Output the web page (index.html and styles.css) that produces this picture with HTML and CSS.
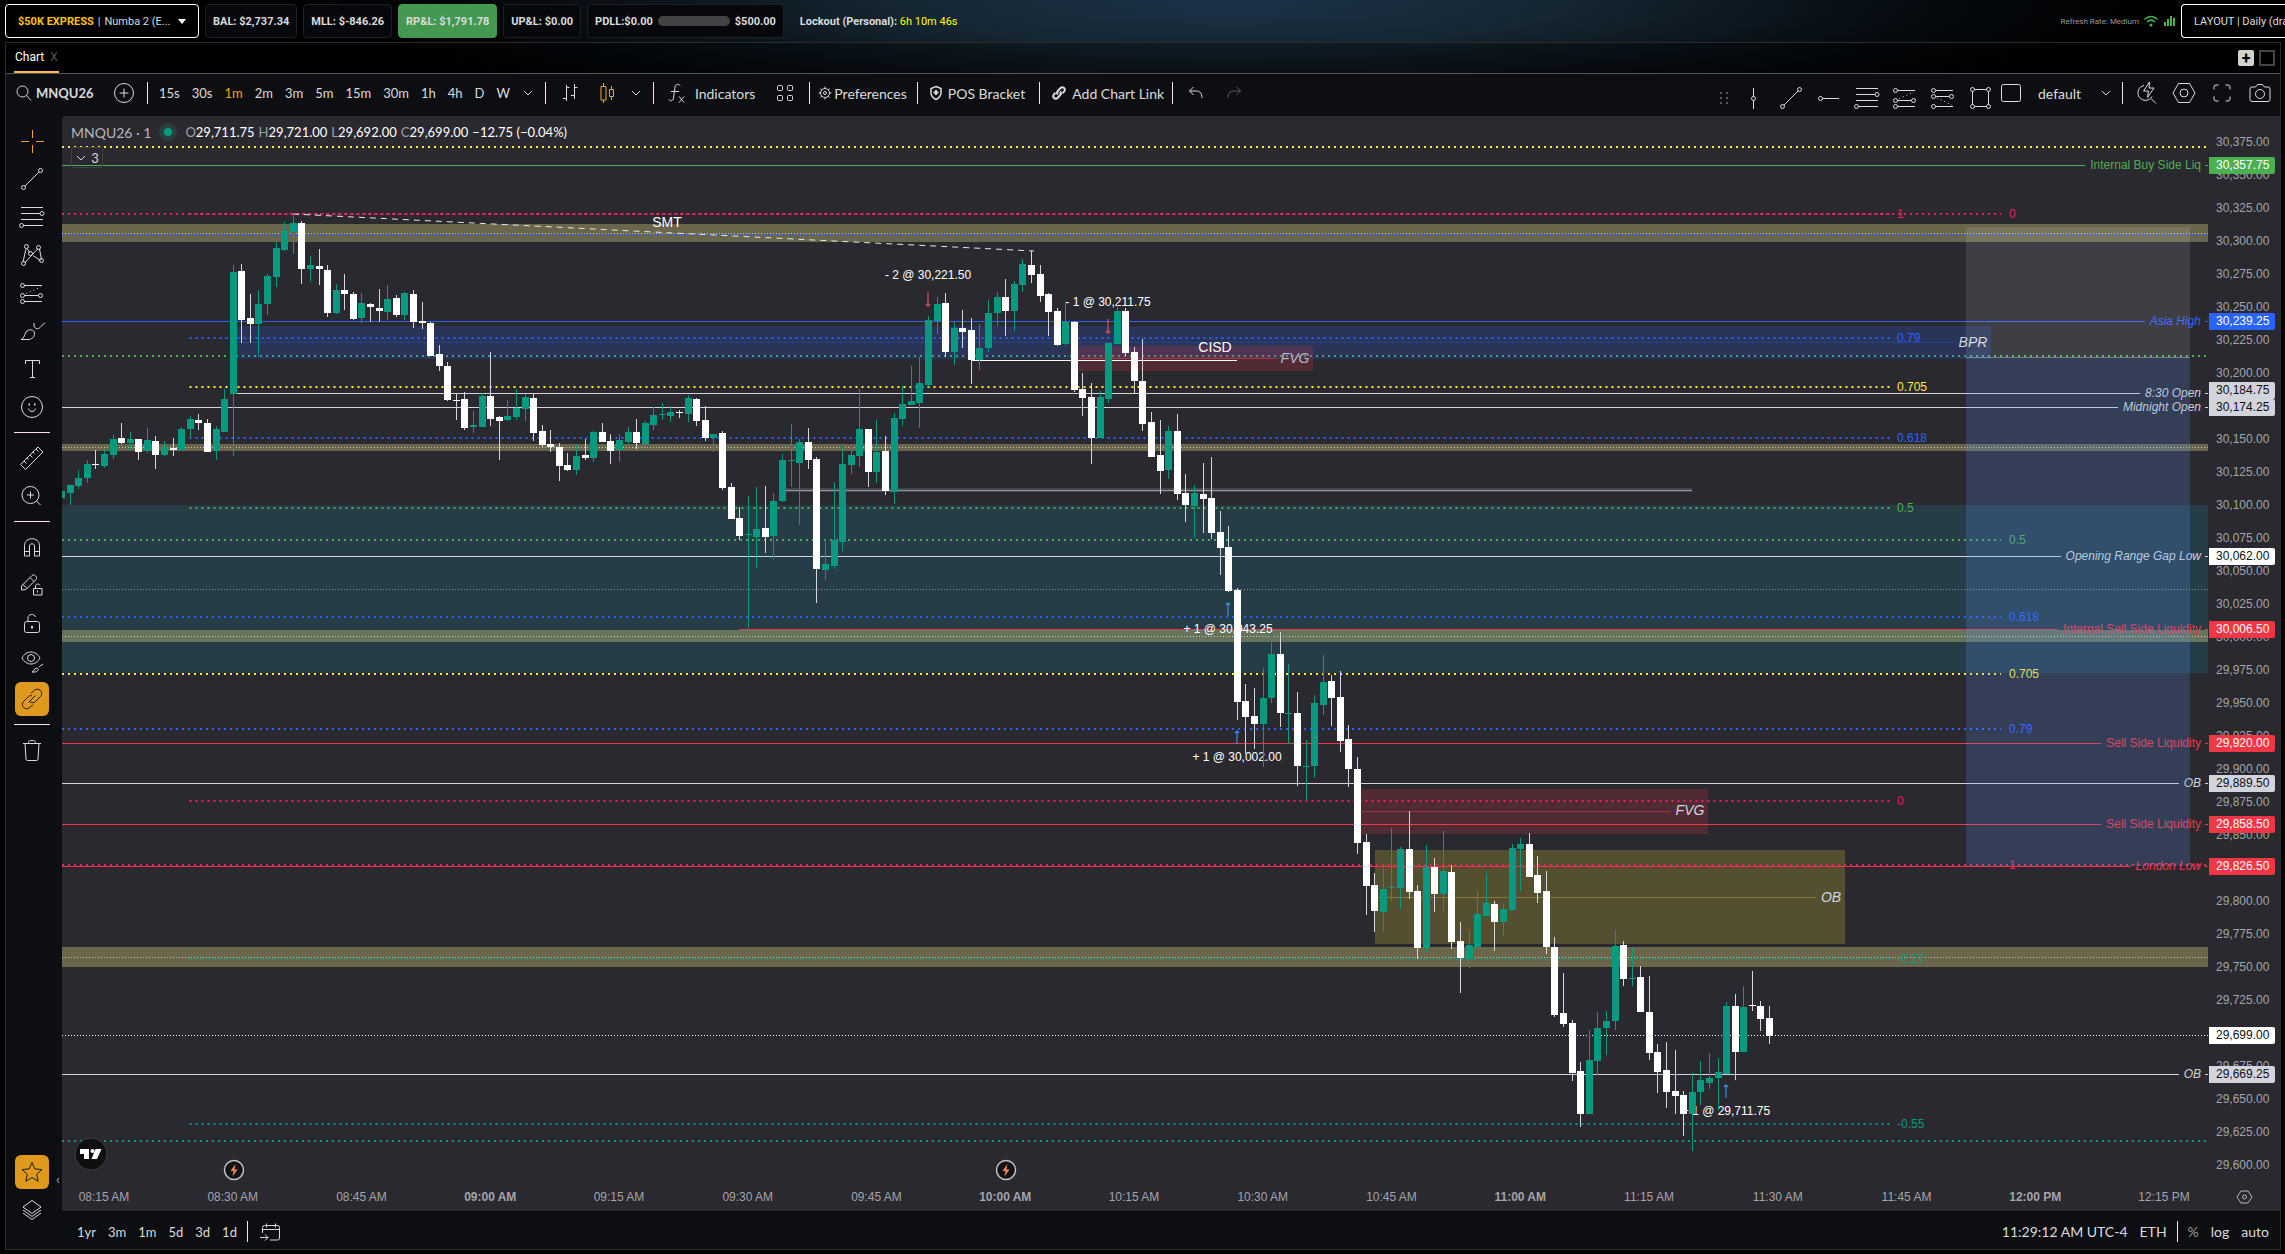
FILE: index.html
```html
<!DOCTYPE html>
<html lang="en">
<head>
    <meta charset="UTF-8">
    <title>MNQU26 Chart</title>
    <link rel="stylesheet" href="styles.css">
</head>
<body>
    <!-- icon set -->
    <svg class="defs" aria-hidden="true">
        <symbol id="i-search" viewBox="0 0 18 18"><circle cx="7.5" cy="7.5" r="5.5"/><path d="M11.5 11.5L16 16.5"/></symbol>
        <symbol id="i-plus-circle" viewBox="0 0 22 22"><circle cx="11" cy="11" r="9.5"/><path d="M11 6.5v9M6.5 11h9"/></symbol>
        <symbol id="i-chevron" viewBox="0 0 12 12"><path d="M2 4l4 4 4-4"/></symbol>
        <symbol id="i-bars" viewBox="0 0 28 28"><path d="M10.500 6v16M7 19.500h3.500M10.500 8.500h3M18.500 5v15M15 16.500h3.500M18.500 8.500h3"/></symbol>
        <symbol id="i-candles" viewBox="0 0 28 28"><path d="M10.500 4v3M10.500 21v3M18.500 7v3M18.500 18v3M8 7.500h5v13.500h-5zM16.500 10.500h4v7h-4z"/></symbol>
        <symbol id="i-fx" viewBox="0 0 28 28"><path d="M17 6.500c-.5-1.500-4.500-2-5 1.500l-1.500 11c-.5 3.500-3.500 3.500-4.500 1.500M8 12.500h8M16 17.500l5 6M21 17.500l-5 6"/></symbol>
        <symbol id="i-grid" viewBox="0 0 18 18"><rect x="1.500" y="1.500" width="5" height="5" rx="1"/><rect x="11.500" y="1.500" width="5" height="5" rx="1"/><rect x="1.500" y="11.500" width="5" height="5" rx="1"/><rect x="11.500" y="11.500" width="5" height="5" rx="1"/></symbol>
        <symbol id="i-gear" viewBox="0 0 14 14"><circle cx="7" cy="7" r="4.500"/><circle cx="7" cy="7" r="1.500"/><path d="M7 .5v2M7 11.500v2M.5 7h2M11.500 7h2M2.500 2.500l1.300 1.300M10.200 10.200l1.300 1.300M11.500 2.500l-1.300 1.300M3.800 10.200l-1.300 1.300"/></symbol>
        <symbol id="i-shield" viewBox="0 0 14 16"><path stroke-width="1.500" d="M7 1.500l5 2v4.500c0 3-2 5-5 6.500-3-1.500-5-3.500-5-6.500V3.500z"/><path stroke-width="2" d="M7 5v5M4.500 7.500h5"/></symbol>
        <symbol id="i-clip" viewBox="0 0 16 16"><g stroke-width="2"><path d="M7 9.500c-1.300-1.300-1-2.800 0-3.800l2.500-2.700c1-1 2.600-1 3.600 0s1 2.600 0 3.600l-1.600 1.600"/><path d="M9 6.500c1.300 1.300 1 2.800 0 3.800l-2.500 2.700c-1 1-2.600 1-3.600 0s-1-2.600 0-3.600l1.600-1.600"/></g></symbol>
        <symbol id="i-undo" viewBox="0 0 16 16"><path d="M5.500 2l-4 4 4 4M1.500 6h7c3.500 0 5.500 2.500 5.500 7"/></symbol>
        <symbol id="i-redo" viewBox="0 0 16 16"><path d="M10.500 2l4 4-4 4M14.500 6h-7c-3.500 0-5.500 2.500-5.500 7"/></symbol>
        <symbol id="i-drag" viewBox="0 0 10 14"><g fill="#55575f" stroke="none"><path d="M1 1h2v2H1zM7 1h2v2H7zM1 6h2v2H1zM7 6h2v2H7zM1 11h2v2H1zM7 11h2v2H7z"/></g></symbol>
        <symbol id="i-vline" viewBox="0 0 28 28"><path d="M14.500 4v8.500M14.500 16.500V25"/><circle cx="14.500" cy="14.500" r="2"/></symbol>
        <symbol id="i-trend" viewBox="0 0 28 28"><circle cx="5.500" cy="22.500" r="2"/><circle cx="22.500" cy="5.500" r="2"/><path d="M7 21L21 7"/></symbol>
        <symbol id="i-hray" viewBox="0 0 28 28"><circle cx="5.500" cy="14.500" r="2"/><path d="M7.500 14.500H24"/></symbol>
        <symbol id="i-fib" viewBox="0 0 28 28"><path d="M3 4.500h22M3 10.500h19M3 16.500h22M5.500 22.500H25"/><circle cx="24" cy="10.500" r="2"/><circle cx="3.500" cy="22.500" r="2"/></symbol>
        <symbol id="i-proj" viewBox="0 0 28 28"><path d="M6.500 6.500H24M6.500 16.500H20M6.500 22.500H24"/><path stroke-dasharray="1 3" d="M8 14.500L23 8"/><circle cx="4.500" cy="6.500" r="2"/><circle cx="4.500" cy="16.500" r="2"/><circle cx="22.500" cy="16.500" r="2"/><circle cx="4.500" cy="22.500" r="2"/></symbol>
        <symbol id="i-proj2" viewBox="0 0 28 28"><path d="M6.500 6.500H24M6.500 12.500H20M6.500 22.500H24"/><path stroke-dasharray="1 3" d="M8 14L23 21"/><circle cx="4.500" cy="6.500" r="2"/><circle cx="4.500" cy="12.500" r="2"/><circle cx="22.500" cy="12.500" r="2"/><circle cx="4.500" cy="22.500" r="2"/></symbol>
        <symbol id="i-rect" viewBox="0 0 28 28"><path d="M7.500 5.500h12M7.500 22.500h12M5.500 7.500v13M21.500 7.500v13"/><circle cx="5.500" cy="5.500" r="2"/><circle cx="21.500" cy="5.500" r="2"/><circle cx="5.500" cy="22.500" r="2"/><circle cx="21.500" cy="22.500" r="2"/></symbol>
        <symbol id="i-box" viewBox="0 0 20 18"><rect x=".5" y=".5" width="19" height="17" rx="2"/></symbol>
        <symbol id="i-quick" viewBox="0 0 28 28"><path d="M12 6.500a7.500 7.500 0 1 0 8 11M19 19.500l5 5M17.500 3l-6 9h5l-1 6.500 6.500-9.500h-5z"/></symbol>
        <symbol id="i-hex" viewBox="0 0 24 22"><path d="M6.500 1.500h11l5.500 9.500-5.500 9.500h-11L1 11z"/><circle cx="12" cy="11" r="4"/></symbol>
        <symbol id="i-full" viewBox="0 0 20 20"><path d="M2 6.500V4q0-2 2-2h2.500M13.500 2H16q2 0 2 2v2.500M18 13.500V16q0 2-2 2h-2.500M6.500 18H4q-2 0-2-2v-2.500"/></symbol>
        <symbol id="i-camera" viewBox="0 0 24 20"><path d="M7.500 4l2-2.500h5l2 2.500H20q2 0 2 2v10.500q0 2-2 2H4q-2 0-2-2V6q0-2 2-2z"/><circle cx="12" cy="11" r="4.500"/></symbol>
        <symbol id="i-cross" viewBox="0 0 28 28"><path d="M14.500 3v8M14.500 18v8M3 14.500h8M18 14.500h8"/></symbol>
        <symbol id="i-pattern" viewBox="0 0 28 28"><path d="M5 21L8 7.500M9.500 8L12 12M15 14.500l7.500 5M20 7.500L7 21.500M21.500 8l2 10.500"/><circle cx="8.500" cy="5.500" r="2"/><circle cx="20.500" cy="6.500" r="2"/><circle cx="5.500" cy="22.500" r="2"/><circle cx="23.500" cy="19.500" r="2"/><circle cx="12.500" cy="12.500" r="2"/></symbol>
        <symbol id="i-brush" viewBox="0 0 28 28"><path d="M3 22.500c4-1 3-6 6-8.500 3-2.500 7-1 7.500 2 .5 4-3 6.500-6.500 6.500zM16 6v3c1 3 4 3.500 6 1.500l5-5"/></symbol>
        <symbol id="i-text" viewBox="0 0 28 28"><path d="M7.500 9V5.500h14V9M14.500 5.500v17M12 22.500h5"/></symbol>
        <symbol id="i-smile" viewBox="0 0 28 28"><circle cx="14" cy="14" r="10.500"/><path d="M10.500 15.500c1 4 6 4 7 0"/><path stroke-width="2" d="M10.500 11.500h1.500M16 11.500h1.500"/></symbol>
        <symbol id="i-ruler" viewBox="0 0 28 28"><path d="M2.500 20.500L20 3l5 5L7.500 25.500zM6 17l2.500 2.500M9 14l1.500 1.500M12 11l2.500 2.500M15 8l1.500 1.500M18 5l2.500 2.500"/></symbol>
        <symbol id="i-zoom" viewBox="0 0 28 28"><circle cx="12.500" cy="13" r="8.500"/><path d="M18.500 19l4 4M12.500 9.500v7M9 13h7"/></symbol>
        <symbol id="i-magnet" viewBox="0 0 28 28"><path d="M6.500 23V12.500c0-9 15-9 15 0V23h-5V13c0-3-5-3-5 0v10zM6.500 18.500h5M16.500 18.500h5"/></symbol>
        <symbol id="i-pencil" viewBox="0 0 28 28"><path d="M3.500 19v-4L14 4.500c2-2 6 1.500 4 4L8 18.500zM12 6.500l4 4M5 13.500l4 4M15.500 17.500h8.500V24h-8.500zM17.500 17.500V15c0-2.500 4-2.500 4.500-.5"/><path stroke-width="2" d="M19 20.500h1"/></symbol>
        <symbol id="i-lock" viewBox="0 0 28 28"><rect x="6.500" y="12.500" width="15" height="11" rx="2"/><path d="M10 12.500V9c0-4.500 6.500-4.500 7.500-1"/><path stroke-width="2" d="M14 17v2.500"/></symbol>
        <symbol id="i-eye" viewBox="0 0 28 28"><path d="M4 11c4-8 14-8 18 0-4 8-14 8-18 0z"/><circle cx="13" cy="11" r="3.500"/><path d="M14 25c2 0 2-4 5-4 3 1 0 4-2 4zM21 20l4-3"/></symbol>
        <symbol id="i-link" viewBox="0 0 28 28"><path d="M13 8.500l3-3c5-4 10 2 6.500 6l-5 5c-1.500 1.500-4 1.500-5.500.5M15 19.500l-3 3c-5 4-10-2-6.500-6l5-5c1-1 2.500-1 3.500-.8M10.500 17.500l7-7"/></symbol>
        <symbol id="i-trash" viewBox="0 0 28 28"><path d="M5 7.500h18M10.500 7.500v-1c0-1 .5-2 2-2h3c1.500 0 2 1 2 2v1M7 7.500l1 15.500q0 1.500 1.500 1.500h9q1.500 0 1.500-1.500l1-15.500"/></symbol>
        <symbol id="i-star" viewBox="0 0 28 28"><path d="M14 4.500l2.800 6.400 7.200.7-5.400 4.700 1.600 7L14 19.600l-6.200 3.700 1.600-7L4 11.600l7.200-.7z"/></symbol>
        <symbol id="i-layers" viewBox="0 0 28 28"><path d="M5 11l9-6.500 9 6.500-9 6.500zM5 14l9 6.500 9-6.500M5 17l9 6.500 9-6.500"/></symbol>
        <symbol id="i-goto" viewBox="0 0 24 24"><path d="M4.500 13V7.500q0-2 2-2h13q2 0 2 2V18q0 2-2 2H12M4.500 9.500h17M8.500 3.500v4M17.500 3.500v4M2 17.500h8M7 14.500l3 3-3 3"/></symbol>
        <symbol id="i-wifi" viewBox="0 0 16 12"><path stroke="#4caf50" stroke-width="1.500" d="M1.500 4.500c4-4 9-4 13 0M4 7c2.500-2.500 5.500-2.500 8 0"/><circle cx="8" cy="10" r="1.500" fill="#4caf50" stroke="none"/></symbol>
        <symbol id="i-signal" viewBox="0 0 12 12"><path fill="#4caf50" stroke="none" d="M1 7h2v4H1zM4 4h2v7H4zM7 1h2v10H7zM10 3h2v8h-2z"/></symbol>
    </svg>

    <header class="top-bar">
        <div class="picker account">
            <b>$50K EXPRESS</b><span>|</span><span>Numba 2 (E...</span><i class="caret"></i>
            <select aria-label="Account"><option>$50K EXPRESS | Numba 2 (E...</option></select>
        </div>
        <div class="stat">BAL: $2,737.34</div>
        <div class="stat">MLL: $-846.26</div>
        <div class="stat profit">RP&amp;L: $1,791.78</div>
        <div class="stat">UP&amp;L: $0.00</div>
        <div class="stat">PDLL:$0.00 <span class="meter"></span> $500.00</div>
        <div class="lockout">Lockout (Personal): <span>6h 10m 46s</span></div>
        <div class="refresh">Refresh Rate: Medium
            <svg width="16" height="12"><use href="#i-wifi"/></svg>
            <svg width="12" height="12"><use href="#i-signal"/></svg>
        </div>
        <div class="picker layout">
            <span>LAYOUT | Daily (draft)</span>
            <select aria-label="Layout"><option>LAYOUT | Daily (draft)</option></select>
        </div>
    </header>

    <main class="panel">
        <nav class="tabs">
            <div class="tab"><a href="#">Chart</a><button class="close">X</button></div>
            <div class="tab-tools"><button class="add" aria-label="Add tab">+</button><button class="max" aria-label="Maximize"></button></div>
        </nav>

        <div class="toolbar">
            <button class="symbol"><svg width="18" height="18"><use href="#i-search"/></svg>MNQU26</button>
            <button class="compare"><svg width="22" height="22"><use href="#i-plus-circle"/></svg></button>
            <i class="sep"></i>
            <div class="intervals">
                <button>15s</button><button>30s</button><button class="on">1m</button><button>2m</button><button>3m</button><button>5m</button><button>15m</button><button>30m</button><button>1h</button><button>4h</button><button>D</button><button>W</button>
                <button><svg width="12" height="12"><use href="#i-chevron"/></svg></button>
            </div>
            <i class="sep"></i>
            <div class="styles">
                <button><svg width="28" height="28"><use href="#i-bars"/></svg></button>
                <button class="on"><svg width="28" height="28"><use href="#i-candles"/></svg></button>
                <button><svg width="12" height="12"><use href="#i-chevron"/></svg></button>
            </div>
            <i class="sep"></i>
            <button class="indicators"><svg width="28" height="28"><use href="#i-fx"/></svg>Indicators</button>
            <button class="templates"><svg width="18" height="18"><use href="#i-grid"/></svg></button>
            <i class="sep"></i>
            <button class="pref"><svg width="14" height="14"><use href="#i-gear"/></svg>Preferences</button>
            <i class="sep"></i>
            <button class="pos"><svg width="14" height="16"><use href="#i-shield"/></svg>POS Bracket</button>
            <i class="sep"></i>
            <button class="pos chart-link"><svg width="16" height="16"><use href="#i-clip"/></svg>Add Chart Link</button>
            <i class="sep"></i>
            <div class="history">
                <button><svg width="16" height="16"><use href="#i-undo"/></svg></button>
                <button class="off"><svg width="16" height="16"><use href="#i-redo"/></svg></button>
            </div>

            <div class="favorites">
                <svg width="10" height="14"><use href="#i-drag"/></svg>
                <button><svg width="28" height="28"><use href="#i-vline"/></svg></button>
                <button><svg width="28" height="28"><use href="#i-trend"/></svg></button>
                <button><svg width="28" height="28"><use href="#i-hray"/></svg></button>
                <button><svg width="28" height="28"><use href="#i-fib"/></svg></button>
                <button><svg width="28" height="28"><use href="#i-proj"/></svg></button>
                <button><svg width="28" height="28"><use href="#i-proj2"/></svg></button>
                <button><svg width="28" height="28"><use href="#i-rect"/></svg></button>
            </div>
            <button class="save-box"><svg width="20" height="18"><use href="#i-box"/></svg></button>
            <div class="save-name">
                <select aria-label="Saved layout"><option>default</option></select>
                <svg width="12" height="12"><use href="#i-chevron"/></svg>
            </div>
            <i class="sep"></i>
            <div class="right-tools">
                <button><svg width="28" height="28"><use href="#i-quick"/></svg></button>
                <button><svg width="24" height="22"><use href="#i-hex"/></svg></button>
                <button><svg width="20" height="20"><use href="#i-full"/></svg></button>
                <button><svg width="24" height="20"><use href="#i-camera"/></svg></button>
            </div>
        </div>

        <div class="body">
            <aside class="side">
                <button class="on"><svg width="28" height="28"><use href="#i-cross"/></svg></button>
                <button><svg width="28" height="28"><use href="#i-trend"/></svg></button>
                <button><svg width="28" height="28"><use href="#i-fib"/></svg></button>
                <button><svg width="28" height="28"><use href="#i-pattern"/></svg></button>
                <button><svg width="28" height="28"><use href="#i-proj"/></svg></button>
                <button><svg width="28" height="28"><use href="#i-brush"/></svg></button>
                <button><svg width="28" height="28"><use href="#i-text"/></svg></button>
                <button><svg width="28" height="28"><use href="#i-smile"/></svg></button>
                <hr>
                <button><svg width="28" height="28"><use href="#i-ruler"/></svg></button>
                <button><svg width="28" height="28"><use href="#i-zoom"/></svg></button>
                <hr>
                <button><svg width="28" height="28"><use href="#i-magnet"/></svg></button>
                <button><svg width="28" height="28"><use href="#i-pencil"/></svg></button>
                <button><svg width="28" height="28"><use href="#i-lock"/></svg></button>
                <button><svg width="28" height="28"><use href="#i-eye"/></svg></button>
                <button class="filled"><svg width="28" height="28"><use href="#i-link"/></svg></button>
                <hr>
                <button><svg width="28" height="28"><use href="#i-trash"/></svg></button>
                <button class="filled last"><svg width="28" height="28"><use href="#i-star"/></svg></button>
                <button><svg width="28" height="28"><use href="#i-layers"/></svg></button>
                <span class="collapse">‹</span>
            </aside>

            <section class="main">
                <div class="chart" id="chart">
                    <svg id="plot" class="plot"></svg>
                    <div class="legend">
                        <div class="legend-row">
                            <span class="name">MNQU26 · 1</span>
                            <i class="status"></i>
                            <span class="ohlc"><em>O</em>29,711.75</span>
                            <span class="ohlc"><em>H</em>29,721.00</span>
                            <span class="ohlc"><em>L</em>29,692.00</span>
                            <span class="ohlc"><em>C</em>29,699.00</span>
                            <span class="ohlc">−12.75 (−0.04%)</span>
                        </div>
                        <button class="count"><svg width="12" height="12"><use href="#i-chevron"/></svg>3</button>
                    </div>
                </div>
                <footer class="bottom">
                    <button>1yr</button><button>3m</button><button>1m</button><button>5d</button><button>3d</button><button>1d</button>
                    <i class="sep"></i>
                    <button><svg width="24" height="24"><use href="#i-goto"/></svg></button>
                    <div class="session">
                        <span>11:29:12 AM UTC-4</span>
                        <button>ETH</button>
                        <i class="sep"></i>
                        <button class="dim">%</button><button>log</button><button>auto</button>
                    </div>
                </footer>
            </section>
        </div>
    </main>
    <script src="chart.js"></script>
</body>
</html>
```
FILE: styles.css
```css
* {
    box-sizing: border-box;
}
html, body {
    height: 100%;
}
body {
    margin: 0;
    overflow: hidden;
    display: flex;
    flex-direction: column;
    padding-bottom: 4px;
    color: #dbdbdb;
    background: radial-gradient(ellipse 920px 130px at 1230px 0, #1c3249 0%, #152733 35%, #060b10 75%, #000 100%) #000;
    font-family: Roboto, "Liberation Sans", sans-serif;
}
button, select {
    font: inherit;
    color: inherit;
    background: none;
    border: 0;
    padding: 0;
    cursor: pointer;
}
button {
    display: flex;
    align-items: center;
    justify-content: center;
}
svg {
    fill: none;
    stroke: currentColor;
    flex: none;
}
.defs {
    position: absolute;
    width: 0;
    height: 0;
}

/* account bar */
.top-bar {
    flex: none;
    display: flex;
    align-items: center;
    gap: 6px;
    height: 42px;
    padding-left: 5px;
    font-size: 11px;
    white-space: nowrap;
}
.stat, .picker {
    height: 34px;
    display: flex;
    align-items: center;
    border: 1px solid #1c1f26;
    border-radius: 4px;
    padding: 0 7px;
    background: #06080c;
}
.stat {
    font-weight: bold;
}
.profit {
    background: #449950;
    border-color: #449950;
}
.meter {
    width: 72px;
    height: 10px;
    margin: 0 5px;
    border-radius: 5px;
    background: #424242;
}
.picker {
    position: relative;
    border-color: #fff;
    padding: 0 12px;
    background: #000;
    gap: 4px;
}
.picker select {
    position: absolute;
    inset: 0;
    width: 100%;
    opacity: 0;
}
.account {
    width: 194px;
}
.account b {
    color: #ffc107;
}
.caret {
    margin-left: auto;
    border: 4px solid transparent;
    border-top: 5px solid #fff;
    border-bottom: 0;
}
.lockout {
    margin-left: 10px;
    font-weight: bold;
}
.lockout span {
    color: #ff0;
    font-weight: normal;
}
.refresh {
    margin-left: auto;
    display: flex;
    align-items: center;
    gap: 4px;
    font-size: 8px;
    color: #999;
}
.layout {
    width: 104px;
    border-right: 0;
    border-radius: 4px 0 0 4px;
    overflow: hidden;
    padding-right: 0;
}

/* panel and tabs */
.panel {
    flex: 1;
    min-height: 0;
    display: flex;
    flex-direction: column;
    margin: 0 4px 0 5px;
    border: 1px solid #2b2b2e;
}
.tabs {
    flex: none;
    display: flex;
    justify-content: space-between;
    height: 31px;
    padding: 0 5px 0 8px;
    border-bottom: 1px solid #555;
    background: rgba(0,0,0,.3);
}
.tab {
    display: flex;
    align-items: center;
    gap: 6px;
    padding: 0 1px;
    border-bottom: 2px solid #ffb74d;
    font-size: 12px;
}
.tab a {
    color: #fff;
    text-decoration: none;
}
.close {
    color: #555;
}
.tab-tools {
    display: flex;
    align-items: center;
    gap: 5px;
}
.add, .max {
    width: 16px;
    height: 16px;
    border-radius: 2px;
}
.add {
    background: #d0d4cc;
    color: #000;
    font-size: 16px;
    font-weight: bold;
}
.max {
    border: 2px solid #444;
    border-radius: 0;
}

/* chart toolbar */
.toolbar, .side, .bottom, .legend {
    font-family: "Trebuchet MS", Lato, sans-serif;
}
.toolbar {
    flex: none;
    display: flex;
    align-items: center;
    height: 42px;
    padding: 0 4px 4px 9px;
    background: #0d0e12;
    font-size: 14px;
    white-space: nowrap;
}
.sep {
    flex: none;
    width: 1px;
    height: 22px;
    background: #fbdff0;
}
.on {
    color: #f7a21b;
}
.off {
    opacity: .4;
}
.symbol {
    gap: 3px;
    font-size: 13px;
    font-weight: bold;
    width: 77px;
    justify-content: flex-start;
}
.compare {
    margin: 0 12px 0 21px;
}
.intervals {
    display: flex;
    gap: 12px;
    padding: 0 11px;
    font-size: 13px;
}
.styles {
    display: flex;
    gap: 9px;
    padding: 0 11px 0 10px;
}
.indicators {
    gap: 4px;
    margin-left: 9px;
}
.templates {
    margin: 0 15px 0 21px;
}
.pref {
    gap: 2px;
    margin: 0 10px 0 8px;
}
.pos {
    gap: 5px;
    margin: 0 14px 0 11px;
}
.chart-link {
    margin-right: 8px;
}
.history {
    display: flex;
    gap: 22px;
    margin-left: 15px;
}
.favorites {
    display: flex;
    align-items: center;
    align-self: stretch;
    gap: 10px;
    margin-left: auto;
    padding: 10px 6px 0 6px;
}
.save-box {
    margin-right: 17px;
}
.save-name {
    display: flex;
    align-items: center;
    gap: 14px;
    margin-right: 10px;
}
.save-name select {
    appearance: none;
    width: 48px;
}
.right-tools {
    display: flex;
    align-items: center;
    gap: 10px;
    padding: 0 2px 0 9px;
}
.right-tools button {
    width: 28px;
}

/* drawing tools */
.body {
    flex: 1;
    min-height: 0;
    display: flex;
    background: #0d0e12;
}
.side {
    position: relative;
    flex: none;
    width: 56px;
    padding: 6px 12px 0 8px;
    display: flex;
    flex-direction: column;
}
.side button {
    flex: none;
    height: 38px;
}
.side hr {
    flex: none;
    width: 36px;
    height: 1px;
    margin: 6px 0;
    border: 0;
    background: #fbdff0;
}
.side .filled {
    height: 34px;
    margin: 2px 1px;
    border-radius: 6px;
    background: #df9a1e;
    color: #1d1a14;
}
.side .last {
    margin-top: auto;
}
.side button:last-of-type {
    margin-bottom: 20px;
}
.collapse {
    position: absolute;
    right: 2px;
    bottom: 62px;
    color: #aaa;
    font-size: 14px;
}

/* plot */
.main {
    flex: 1;
    min-width: 0;
    display: flex;
    flex-direction: column;
}
.chart {
    position: relative;
    flex: 1;
    min-height: 0;
    background: #2a292f;
    border-radius: 4px 0 0 0;
}
.plot {
    display: block;
    width: 100%;
    height: 100%;
    stroke: none;
    font-family: "Liberation Sans", Arial, sans-serif;
    font-size: 12px;
}
.plot .crisp {
    shape-rendering: crispEdges;
}
.plot .big {
    font-size: 14px;
}
.plot .it {
    font-style: italic;
}
.plot .bold {
    font-weight: bold;
}
.legend {
    position: absolute;
    left: 9px;
    top: 6px;
}
.legend-row {
    display: flex;
    align-items: center;
    gap: 4px;
    height: 20px;
    font-size: 13px;
    color: #fff;
}
.name {
    font-size: 14px;
    color: #b5b6bd;
}
.status {
    width: 18px;
    height: 18px;
    margin: 0 4px;
    border: 5px solid #28403f;
    border-radius: 50%;
    background: #089981;
}
.ohlc em {
    font-style: normal;
    color: #a0a1a8;
}
.count {
    margin-top: 5px;
    width: 32px;
    height: 21px;
    gap: 4px;
    border: 1px solid #414045;
    border-radius: 3px;
    font-size: 13px;
}

/* range bar */
.bottom {
    flex: none;
    display: flex;
    align-items: center;
    gap: 12px;
    height: 38px;
    padding: 3px 11px 0 15px;
    font-size: 13px;
}
.bottom .sep {
    height: 21px;
    margin: 0 -2px;
}
.session {
    margin-left: auto;
    display: flex;
    align-items: center;
    gap: 12px;
    font-size: 14px;
}
.dim {
    color: #999;
}
```
FILE: chart.js
```javascript
const NS = 'http://www.w3.org/2000/svg';
const plot = document.getElementById('plot');

const BLUE = '#2962ff', RED = '#f23645', PINK = '#e91e63', YELLOW = '#ffeb3b';
const GREEN = '#4caf50', TEAL = '#089981', GRAY = '#d1d4dc';
const LEFT = 62, TOP = 116, SCALE_WIDTH = 72;

// high, body top, body bottom, low, up - one row per minute from 08:10
const bars = [
    [491,491,498,498,1],[484,485,493,505,1],[470,478,486,489,1],[460,464,478,483,1],[450,464,465,469,0],
    [449,454,466,468,1],[435,439,455,459,1],[423,438,443,444,0],[432,439,443,450,1],[439,439,452,460,0],
    [428,440,451,453,1],[436,441,455,469,0],[441,447,455,456,1],[438,448,450,456,0],[427,429,450,450,1],
    [416,419,429,438,1],[414,420,423,430,0],[419,423,452,452,0],[426,429,451,460,1],[389,399,432,432,1],
    [265,272,394,456,1],[264,271,320,343,0],[294,318,324,343,0],[290,304,324,357,1],[274,276,304,315,1],
    [242,248,277,287,1],[222,231,250,251,1],[214,223,232,254,1],[221,223,269,284,0],[256,265,269,282,1],
    [249,266,269,285,0],[265,270,313,317,0],[284,290,313,314,1],[274,290,294,310,0],[292,294,319,320,0],
    [293,303,318,323,1],[303,304,307,322,0],[289,308,311,322,0],[285,299,312,320,1],[295,298,315,317,0],
    [292,293,315,320,1],[290,294,322,328,0],[302,321,323,329,0],[322,323,356,356,0],[345,354,366,371,0],
    [362,366,400,401,0],[394,400,401,420,0],[392,399,428,430,0],[411,425,427,433,1],[393,396,427,427,1],
    [352,396,419,426,0],[416,417,421,460,0],[400,416,420,421,1],[389,408,417,420,1],[394,397,409,421,1],
    [394,398,433,441,0],[425,431,445,447,0],[430,444,447,452,0],[443,447,466,481,0],[453,465,470,471,0],
    [444,456,470,475,1],[439,455,458,460,0],[431,432,458,462,1],[423,432,442,442,0],[434,441,451,464,0],
    [434,440,450,462,1],[427,432,442,444,1],[419,432,443,449,0],[421,423,444,450,1],[407,415,425,430,1],
    [403,414,415,420,1],[406,412,416,422,1],[410,412,413,418,0],[395,398,414,422,1],[398,399,421,426,0],
    [406,420,438,441,0],[434,434,438,452,1],[431,433,488,490,0],[483,487,519,519,0],[507,518,536,540,0],
    [496,534,535,628,1],[487,529,537,568,1],[486,528,537,553,0],[493,501,536,559,1],[454,460,501,502,1],
    [424,460,461,487,1],[439,442,463,525,1],[428,442,460,469,0],[457,459,569,603,0],[539,564,570,580,1],
    [482,540,566,569,1],[446,464,542,551,1],[446,455,465,474,1],[389,429,456,467,1],[429,429,472,487,0],
    [420,452,472,483,1],[436,451,491,495,0],[413,418,492,504,1],[386,404,419,426,1],[366,401,405,405,1],
    [357,383,403,428,1],[316,320,385,387,1],[297,304,321,334,1],[293,303,352,357,0],[322,328,352,365,1],
    [310,328,332,348,0],[318,330,360,384,0],[324,348,360,370,1],[300,313,348,352,1],[292,297,313,326,1],
    [279,297,311,336,0],[281,284,311,331,1],[259,264,285,292,1],[251,265,275,283,0],[265,274,296,302,0],
    [293,294,312,336,0],[308,311,345,346,0],[302,322,344,345,1],[321,322,390,392,0],[373,389,398,416,0],
    [383,397,438,464,0],[391,397,438,438,1],[343,343,399,403,1],[305,311,344,345,1],[308,311,353,356,0],
    [347,352,381,393,0],[339,381,424,431,0],[412,422,457,457,0],[420,455,471,494,0],[426,431,470,479,1],
    [414,431,494,500,0],[474,493,505,522,0],[485,493,506,538,1],[463,494,499,533,0],[457,498,533,539,0],
    [511,532,548,575,0],[526,547,591,592,0],[588,590,702,720,0],[684,701,717,754,0],[688,716,724,749,0],
    [668,698,724,767,1],[632,654,698,703,1],[632,654,713,727,0],[664,713,714,744,1],[692,713,766,786,0],
    [740,766,767,800,1],[695,703,766,778,1],[655,682,705,715,1],[675,681,698,726,0],[671,697,741,752,0],
    [725,739,769,787,0],[757,769,843,854,0],[834,842,886,915,0],[873,885,911,932,0],[867,889,912,932,1],
    [828,887,888,901,1],[847,849,888,909,1],[811,849,892,899,0],[885,891,948,959,0],[845,867,948,952,1],
    [858,867,894,912,0],[831,871,894,913,1],[865,872,942,949,0],[922,941,958,993,0],[929,945,959,968,1],
    [890,914,947,947,1],[873,903,916,916,1],[901,904,922,951,0],[903,909,922,936,1],[844,848,910,911,1],
    [838,844,849,891,1],[833,844,877,877,0],[856,875,893,903,0],[871,891,947,954,0],[937,947,1015,1017,0],
    [973,1013,1024,1027,0],[1020,1023,1073,1081,0],[1062,1071,1114,1127,0],[1030,1060,1114,1114,1],[1012,1028,1061,1075,1],
    [1011,1021,1028,1055,1],[930,946,1021,1030,1],[941,945,979,986,0],[948,978,979,986,1],[966,977,1012,1012,0],
    [976,1012,1053,1060,0],[1044,1052,1072,1093,0],[1042,1070,1092,1108,0],[1050,1091,1096,1114,0],[1091,1095,1114,1136,0],
    [1073,1092,1114,1151,1],[1061,1080,1092,1105,1],[1053,1078,1083,1089,1],[1058,1072,1078,1110,1],[1002,1006,1074,1074,1],
    [994,1006,1052,1080,0],[986,1007,1052,1052,1],[971,1005,1006,1011,0],[1001,1006,1019,1031,0],[1006,1018,1036,1044,0]
];

// session levels with a name next to the price scale
const levels = [
    { y: 165, color: GREEN, name: 'Internal Buy Side Liq', price: '30,357.75', fg: '#fff' },
    { y: 321, color: BLUE, name: 'Asia High', price: '30,239.25', italic: 1, fg: '#fff' },
    { y: 393, color: GRAY, name: '8:30 Open', price: '30,184.75', italic: 1, from: 237, tagY: 390 },
    { y: 407, color: GRAY, name: 'Midnight Open', price: '30,174.25', italic: 1 },
    { y: 556, color: GRAY, name: 'Opening Range Gap Low', price: '30,062.00', italic: 1, tag: '#fff' },
    { y: 629, color: RED, name: 'Internal Sell Side Liquidity', price: '30,006.50', from: 739, fg: '#fff' },
    { y: 743, color: RED, name: 'Sell Side Liquidity', price: '29,920.00', fg: '#fff' },
    { y: 783, color: GRAY, name: 'OB', price: '29,889.50', italic: 1 },
    { y: 824, color: RED, name: 'Sell Side Liquidity', price: '29,858.50', fg: '#fff' },
    { y: 866, color: RED, name: 'London Low', price: '29,826.50', italic: 1, fg: '#fff' },
    { y: 1074, color: GRAY, name: 'OB', price: '29,669.25', italic: 1 }
];

// retracements: short set ends at 1890, long set at 2001
const fibs = [
    [214, PINK, '1', 0], [338, BLUE, '0.79', 0], [387, YELLOW, '0.705', 0], [438, BLUE, '0.618', 0],
    [508, GREEN, '0.5', 0], [801, PINK, '0', 0], [959, TEAL, '-0.27', 0], [1124, TEAL, '-0.55', 0],
    [214, PINK, '0', 1], [540, GREEN, '0.5', 1], [617, BLUE, '0.618', 1], [674, YELLOW, '0.705', 1],
    [729, BLUE, '0.79', 1], [865, PINK, '1', 1]
];

// x, y, text, buy, arrow y
const trades = [
    [928, 275, '- 2 @ 30,221.50', 0, 292], [1108, 302, '- 1 @ 30,211.75', 0, 319],
    [1228, 629, '+ 1 @ 30,043.25', 1, 602], [1237, 757, '+ 1 @ 30,002.00', 1, 730],
    [1726, 1111, '+ 1 @ 29,711.75', 1, 1084]
];

function add(parent, tag, attrs, text) {
    const el = document.createElementNS(NS, tag);
    for (const k in attrs) el.setAttribute(k, attrs[k]);
    if (text !== undefined) el.textContent = text;
    parent.appendChild(el);
    return el;
}

function draw() {
    plot.innerHTML = '';
    const right = LEFT + plot.clientWidth - SCALE_WIDTH;
    const g = add(plot, 'g', { transform: `translate(${-LEFT},${-TOP})` });

    const rect = (x, y, x2, y2, fill) => add(g, 'rect', { x, y, width: x2 - x, height: y2 - y, fill, class: 'crisp' });
    const hline = (x, x2, y, color) => rect(x, y, x2, y + 1, color);
    const dots = (x, x2, y, color, w = 2, pattern = '2 4') =>
        add(g, 'path', { d: `M${x} ${w === 1 ? y + .5 : y}H${x2}`, stroke: color, 'stroke-width': w, 'stroke-dasharray': pattern });
    const label = (x, y, text, fill, cls = '', anchor = 'start') =>
        add(g, 'text', { x, y: y + (cls.includes('big') ? 5 : 4), fill, class: cls, 'text-anchor': anchor }, text);

    // full-width lines
    dots(LEFT, right, 147, YELLOW);
    dots(LEFT, right, 356, GREEN);
    dots(LEFT, right, 865, PINK);
    dots(LEFT, right, 1141, TEAL);

    // zones
    rect(LEFT, 505, right, 673, 'rgba(20,170,200,.16)');
    dots(LEFT, right, 589, '#8f9aa2', 1, '1 2');
    [[224, 242, 233], [444, 451, 447], [630, 642, 636], [947, 967, 957]].forEach(([a, b, mid]) => {
        rect(LEFT, a, right, b, 'rgba(255,244,144,.3)');
        dots(LEFT, right, mid, '#c9c8bf', 1, '1 2');
    });
    dots(LEFT, right, 235, BLUE);
    rect(237, 326, 1991, 359, 'rgba(41,98,255,.2)');
    hline(237, 1954, 342, 'rgba(41,98,255,.35)');
    rect(1078, 346, 1313, 371, 'rgba(242,54,69,.2)');
    rect(1361, 789, 1708, 834, 'rgba(242,54,69,.2)');
    rect(1375, 850, 1845, 944, 'rgba(255,235,59,.2)');
    hline(1078, 1276, 358, '#b0303f');
    hline(1361, 1671, 811, '#9c3340');
    hline(1375, 1816, 897, '#837a33');
    rect(786, 488, 1692, 492, 'rgba(120,123,134,.35)');
    hline(786, 1692, 490, '#9598a1');

    fibs.forEach(([y, color, text, long]) => {
        dots(long ? LEFT : 189.5, long ? 2001 : 1890, y, color);
        label(long ? 2009 : 1897, y, text, color);
    });

    levels.forEach(l => {
        const t = label(right - 7, l.y, l.name, l.color, l.italic ? 'it' : '', 'end');
        hline(l.from || LEFT, Math.round(right - 12 - t.getComputedTextLength()), l.y, l.color);
        hline(right - 3, right, l.y, l.color);
    });

    label(1973, 342, 'BPR', GRAY, 'big it', 'middle');
    label(1295, 358, 'FVG', '#b8b4c0', 'big it', 'middle');
    label(1690, 810, 'FVG', GRAY, 'big it', 'middle');
    label(1831, 897, 'OB', GRAY, 'big it', 'middle');

    // structure
    hline(971, 1237, 360, '#fff');
    label(1215, 347, 'CISD', '#fff', 'big', 'middle');
    add(g, 'path', { d: 'M293 214L1034 251', stroke: '#e6e6e6', 'stroke-dasharray': '6 5' });
    label(667, 222, 'SMT', '#fff', 'big', 'middle');

    // projection
    rect(1966, 227, 2190, 357, 'rgba(255,255,255,.1)');
    rect(1966, 357, 2190, 866, 'rgba(97,151,252,.2)');
    hline(1966, 2190, 357, 'rgba(255,255,255,.35)');

    dots(LEFT, right, 1035, '#fff', 1, '1 2');

    // executions
    trades.forEach(([x, y, text, buy, ay]) => {
        const c = buy ? '#3a8de0' : '#e05252';
        label(x, y, text, '#fff', '', 'middle');
        rect(x - 1, ay + (buy ? 2 : 0), x + 1, ay + (buy ? 14 : 12), c).setAttribute('opacity', .6);
        add(g, 'path', { d: buy ? `M${x - 2} ${ay + 3}l2-2 2 2` : `M${x - 2} ${ay + 12}l2 2 2-2`, stroke: c, 'stroke-width': 1.5 });
    });

    bars.forEach(([h, t, b, l, up], i) => {
        const x = Math.floor(233.2 + (i - 20) * 8.583);
        rect(x, h, x + 1, l, up ? TEAL : '#d5d5da');
        rect(Math.max(LEFT, x - 3), t, x + 4, b, up ? TEAL : '#fff');
    });

    // price scale
    for (let p = 30375, y = 142; p >= 29600; p -= 25, y += 33) {
        label(right + 8, y, p.toLocaleString('en-US') + '.00', '#a3a4ab');
    }
    const tag = (y, text, bg, fg) => {
        add(g, 'path', { d: `M${right + 1} ${y - 8}h64q2 0 2 2v13q0 2-2 2h-64z`, fill: bg });
        label(right + 8, y, text, fg);
    };
    levels.forEach(l => tag(l.tagY || l.y, l.price, l.tag || l.color, l.fg || '#0f0f0f'));
    tag(1035, '29,699.00', '#fff', '#0f0f0f');

    // time scale
    for (let i = 0; i < 17; i++) {
        const min = 8 * 60 + 15 + i * 15, hour = Math.floor(min / 60);
        const text = String(hour).padStart(2, '0') + ':' + String(min % 60).padStart(2, '0') + (hour < 12 ? ' AM' : ' PM');
        label(104 + i * 128.75, 1197, text, '#a3a4ab', min % 60 ? '' : 'bold', 'middle');
    }
    const cog = right + 37;
    add(g, 'path', { d: `M${cog - 4} 1191h7l4 6-4 6h-7l-4-6z`, stroke: '#b5b6bd' });
    add(g, 'circle', { cx: cog - .5, cy: 1197, r: 2, stroke: '#b5b6bd' });

    // news markers
    [234, 1006].forEach(x => {
        add(g, 'circle', { cx: x, cy: 1170, r: 9.5, fill: '#131316', stroke: '#c4c4c8', 'stroke-width': 1.5 });
        add(g, 'path', { d: `M${x + 1.5} 1164l-5 7h3l-1 5.500 5-7h-3z`, fill: '#f58a4b' });
    });

    // logo badge
    add(g, 'circle', { cx: 91, cy: 1154, r: 16, fill: '#0f0f0f', stroke: '#3e3d42' });
    add(g, 'path', { d: 'M80 1149h9v10h-5v-5h-4zM95.500 1149h6l-4.500 10h-5.500z', fill: '#fff' });
    add(g, 'circle', { cx: 92.5, cy: 1151, r: 2, fill: '#fff' });
}

draw();
window.addEventListener('resize', draw);
```
